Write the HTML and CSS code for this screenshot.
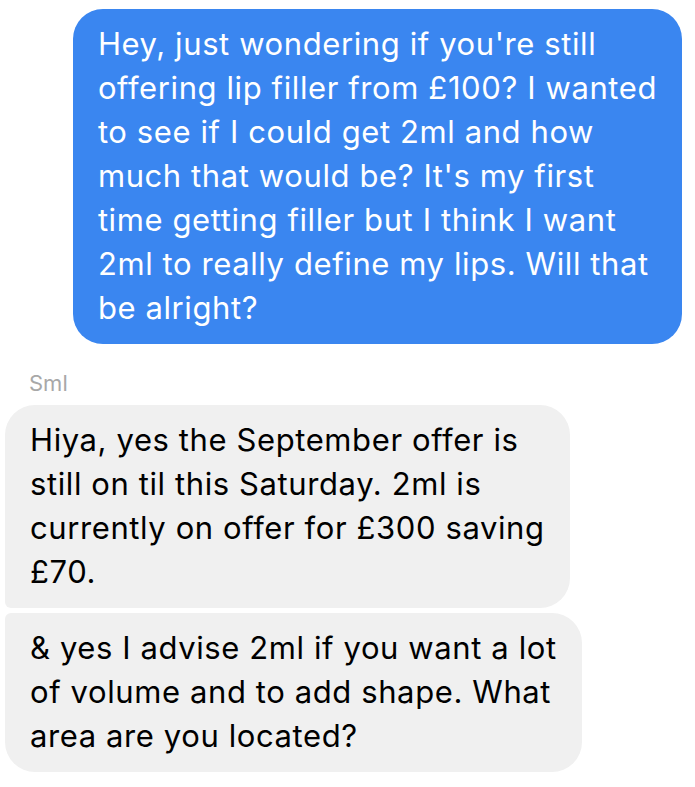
FILE: index.html
```html
<!DOCTYPE html>
<html>
<head>
  <title>Messages</title>
  <link rel="stylesheet" href="styles.css">
</head>
<body>
  <div class="thread">
    <div class="bubble sent">
      Hey, just wondering if you're still<br>
      offering lip filler from £100? I wanted<br>
      to see if I could get 2ml and how<br>
      much that would be? It's my first<br>
      time getting filler but I think I want<br>
      2ml to really define my lips. Will that<br>
      be alright?
    </div>

    <div class="sender-name">Sml</div>

    <div class="group">
      <div class="bubble received first">
        Hiya, yes the September offer is<br>
        still on til this Saturday. 2ml is<br>
        currently on offer for £300 saving<br>
        £70.
      </div>
      <div class="bubble received last">
        &amp; yes I advise 2ml if you want a lot<br>
        of volume and to add shape. What<br>
        area are you located?
      </div>
    </div>
  </div>
</body>
</html>
```

FILE: styles.css
```css
body {
  margin: 0;
  background: #ffffff;
  font-family: Inter, "Noto Sans", sans-serif;
}

.thread {
  display: flex;
  flex-direction: column;
  padding: 9px 13px 0 5px;
}

.bubble {
  font-size: 31px;
  line-height: 44px;
  letter-spacing: 0.6px;
  padding: 13px 25px 14px 25px;
  border-radius: 30px;
  white-space: nowrap;
}

.sent {
  align-self: flex-end;
  background: #3a86f0;
  color: #ffffff;
}

.sender-name {
  margin: 26px 0 9px 24px;
  font-size: 22px;
  line-height: 26px;
  color: #a8a8a8;
}

.group {
  display: flex;
  flex-direction: column;
  align-items: flex-start;
  gap: 5px;
}

.received {
  background: #f0f0f0;
  color: #000000;
}

.received.first {
  border-bottom-left-radius: 6px;
}

.received.last {
  border-top-left-radius: 6px;
}
```
